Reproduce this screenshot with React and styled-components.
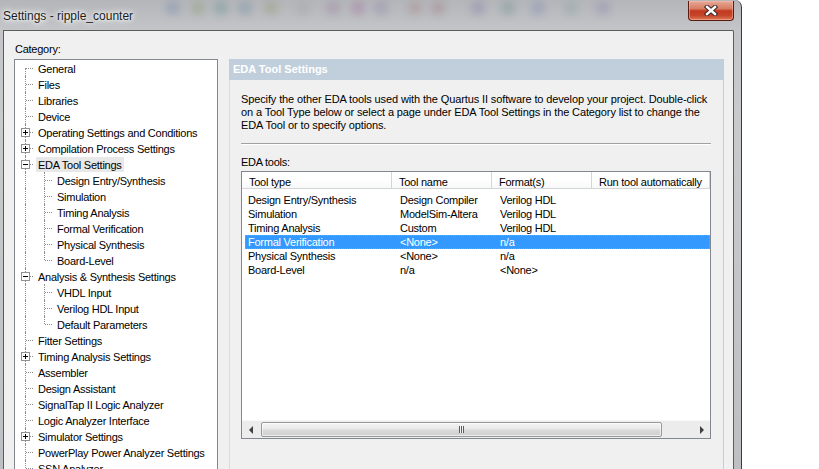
import styled, { createGlobalStyle } from "styled-components";

const GlobalStyle = createGlobalStyle`
  html, body {
    margin: 0;
    padding: 0;
    background: #ffffff;
  }
  body {
    font-family: "Liberation Sans", Arial, sans-serif;
    font-size: 11px;
    color: #000;
  }
`;

const treeItems = [
  { label: "General", kind: "first" },
  { label: "Files" },
  { label: "Libraries" },
  { label: "Device" },
  { label: "Operating Settings and Conditions", exp: "closed" },
  { label: "Compilation Process Settings", exp: "closed" },
  { label: "EDA Tool Settings", exp: "open", selected: true },
  { label: "Design Entry/Synthesis", level: 1 },
  { label: "Simulation", level: 1 },
  { label: "Timing Analysis", level: 1 },
  { label: "Formal Verification", level: 1 },
  { label: "Physical Synthesis", level: 1 },
  { label: "Board-Level", level: 1, last: true },
  { label: "Analysis & Synthesis Settings", exp: "open" },
  { label: "VHDL Input", level: 1 },
  { label: "Verilog HDL Input", level: 1 },
  { label: "Default Parameters", level: 1, last: true },
  { label: "Fitter Settings" },
  { label: "Timing Analysis Settings", exp: "closed" },
  { label: "Assembler" },
  { label: "Design Assistant" },
  { label: "SignalTap II Logic Analyzer" },
  { label: "Logic Analyzer Interface" },
  { label: "Simulator Settings", exp: "closed" },
  { label: "PowerPlay Power Analyzer Settings" },
  { label: "SSN Analyzer" },
];

const tools = [
  ["Design Entry/Synthesis", "Design Compiler", "Verilog HDL"],
  ["Simulation", "ModelSim-Altera", "Verilog HDL"],
  ["Timing Analysis", "Custom", "Verilog HDL"],
  ["Formal Verification", "<None>", "n/a", true],
  ["Physical Synthesis", "<None>", "n/a"],
  ["Board-Level", "n/a", "<None>"],
];

function TreeNode({ item }) {
  const level = item.level || 0;
  return (
    <TreeRow>
      {level === 1 && <Guide $kind="pipe" />}
      <Guide $kind={item.last ? "corner" : item.kind || "tee"}>
        {item.exp && <Expander $open={item.exp === "open"} />}
      </Guide>
      <NodeLabel $selected={item.selected}>{item.label}</NodeLabel>
    </TreeRow>
  );
}

function CloseGlyph() {
  return (
    <svg width="14" height="11" viewBox="0 0 14 11">
      <path d="M3 2 L11 9 M11 2 L3 9" stroke="#3b2a28" strokeWidth="4.4" strokeLinecap="square" />
      <path d="M3 2 L11 9 M11 2 L3 9" stroke="#ffffff" strokeWidth="2.4" strokeLinecap="square" />
    </svg>
  );
}

function GlassBackdrop() {
  const blobs = [
    [20, "#6c86a8"], [45, "#8a9a70"], [68, "#5f8c8c"], [92, "#6a8aa0"], [118, "#8a9a6a"],
    [150, "#a0a0a8"], [180, "#9c7ca0"], [205, "#a06a9a"], [228, "#9080a8"], [262, "#a88080"],
    [285, "#a07878"], [325, "#7a7aa8"], [355, "#6c8c90"], [385, "#7a86b0"], [418, "#8aa0a0"],
    [450, "#8c80b0"],
  ];
  return (
    <Backdrop width="480" height="30" viewBox="0 0 480 30">
      <defs>
        <filter id="glassBlur" x="-50%" y="-50%" width="200%" height="200%">
          <feGaussianBlur stdDeviation="4" />
        </filter>
      </defs>
      <g filter="url(#glassBlur)" opacity="0.4">
        {blobs.map(([x, c]) => (
          <circle key={x} cx={x} cy="8" r="7" fill={c} />
        ))}
      </g>
    </Backdrop>
  );
}

export default function App() {
  return (
    <Page>
      <GlobalStyle />
      <Window>
        <TitleBar>
          <Title>Settings - ripple_counter</Title>
          <GlassBackdrop />
          <CloseButton>
            <CloseGlyph />
          </CloseButton>
        </TitleBar>
        <Client>
          <CategoryLabel>Category:</CategoryLabel>
          <Tree>
            {treeItems.map((item) => (
              <TreeNode key={item.label} item={item} />
            ))}
          </Tree>
          <Panel>
            <PanelHeader>EDA Tool Settings</PanelHeader>
            <PanelBody>
              <Description>
                Specify the other EDA tools used with the Quartus II software to develop your project. Double-click
                <br />
                on a Tool Type below or select a page under EDA Tool Settings in the Category list to change the
                <br />
                EDA Tool or to specify options.
              </Description>
              <Separator />
              <FieldLabel>EDA tools:</FieldLabel>
              <ListView>
                <HeaderRow>
                  <HeaderCell>Tool type</HeaderCell>
                  <HeaderCell>Tool name</HeaderCell>
                  <HeaderCell>Format(s)</HeaderCell>
                  <HeaderCell>Run tool automatically</HeaderCell>
                </HeaderRow>
                <Rows>
                  {tools.map(([type, name, format, selected]) => (
                    <DataRow key={type} $selected={selected}>
                      <Cell $first>{type}</Cell>
                      <Cell>{name}</Cell>
                      <Cell>{format}</Cell>
                      <Cell />
                    </DataRow>
                  ))}
                </Rows>
                <HScroll>
                  <ArrowButton>
                    <ArrowLeft />
                  </ArrowButton>
                  <Track>
                    <Thumb>
                      <Grip />
                    </Thumb>
                  </Track>
                  <ArrowButton>
                    <ArrowRight />
                  </ArrowButton>
                </HScroll>
              </ListView>
            </PanelBody>
          </Panel>
        </Client>
      </Window>
    </Page>
  );
}

const Page = styled.div`
  width: 819px;
  height: 469px;
  overflow: hidden;
  background: #ffffff;
`;

const Window = styled.div`
  box-sizing: border-box;
  width: 742px;
  height: 469px;
  display: flex;
  flex-direction: column;
  padding: 0 7px 0 3px;
  border-right: 1px solid #3a3a3a;
  border-top-right-radius: 7px;
  background: linear-gradient(180deg, #b3b5b9 0px, #c3c5c8 30px, #c9cacc 120px, #bdbfc2 469px);
`;

const TitleBar = styled.div`
  height: 30px;
  flex: none;
  display: flex;
  align-items: flex-start;
`;

const Title = styled.div`
  flex: none;
  margin-top: 9px;
  font-size: 12px;
  line-height: 15px;
  color: #1c1c1c;
  text-shadow: 0 0 6px #ffffff, 0 0 10px #ffffff, 0 0 3px #ffffff;
`;

const Backdrop = styled.svg`
  flex: none;
  margin-left: 20px;
`;

const CloseButton = styled.div`
  margin-left: auto;
  margin-top: 1px;
  box-sizing: border-box;
  width: 46px;
  height: 20px;
  display: flex;
  align-items: center;
  justify-content: center;
  border: 1px solid #5a1b12;
  border-top: none;
  border-radius: 0 0 4px 4px;
  background: linear-gradient(180deg, #e6aa98 0%, #d77d63 40%, #c23a20 52%, #c54328 75%, #de7a58 100%);
  box-shadow: inset 0 0 0 1px rgba(255, 200, 180, 0.45);
`;

const Client = styled.div`
  flex: 1;
  min-height: 0;
  display: grid;
  grid-template-columns: 204px 495px;
  grid-template-rows: 17px 1fr;
  column-gap: 11px;
  padding: 11px 0 0 10px;
  background: #f0f0f0;
  border: 1px solid #5c5c5c;
  border-bottom: none;
  border-top-right-radius: 2px;
  overflow: hidden;
`;

const CategoryLabel = styled.div`
  grid-column: 1;
  grid-row: 1;
  padding-top: 1px;
  line-height: 13px;
  letter-spacing: -0.25px;
  padding-left: 1px;
`;

const Tree = styled.div`
  grid-column: 1;
  grid-row: 2;
  background: #ffffff;
  border: 1px solid #828790;
  border-bottom: none;
  overflow: hidden;
`;

const TreeRow = styled.div`
  height: 16px;
  display: flex;
  align-items: center;
  white-space: nowrap;
`;

const Guide = styled.span`
  position: relative;
  flex: none;
  width: 19px;
  height: 16px;

  &::before {
    content: "";
    position: absolute;
    left: 10px;
    top: ${(p) => (p.$kind === "first" ? "8px" : "0")};
    height: ${(p) => (p.$kind === "first" || p.$kind === "corner" ? "8px" : "16px")};
    border-left: 1px dotted #8c8c8c;
  }

  &::after {
    content: "";
    display: ${(p) => (p.$kind === "pipe" ? "none" : "block")};
    position: absolute;
    left: 11px;
    top: 8px;
    width: 7px;
    border-top: 1px dotted #8c8c8c;
  }
`;

const Expander = styled.span`
  position: absolute;
  z-index: 1;
  left: 6px;
  top: 4px;
  width: 9px;
  height: 9px;
  box-sizing: border-box;
  border: 1px solid #919191;
  background: #ffffff;

  &::before {
    content: "";
    position: absolute;
    left: 1px;
    top: 3px;
    width: 5px;
    height: 1px;
    background: #000;
  }

  &::after {
    content: "";
    display: ${(p) => (p.$open ? "none" : "block")};
    position: absolute;
    left: 3px;
    top: 1px;
    width: 1px;
    height: 5px;
    background: #000;
  }
`;

const NodeLabel = styled.span`
  margin-left: 2px;
  padding: 1px 2px 0;
  line-height: 14px;
  letter-spacing: -0.25px;
  background: ${(p) => (p.$selected ? "#e8e8e8" : "transparent")};
`;

const Panel = styled.div`
  grid-column: 2;
  grid-row: 2;
  display: flex;
  flex-direction: column;
  min-height: 0;
`;

const PanelHeader = styled.div`
  flex: none;
  height: 21px;
  line-height: 21px;
  padding-left: 4px;
  background: #c1cfdc;
  color: #ffffff;
  font-weight: bold;
`;

const PanelBody = styled.div`
  flex: 1;
  padding: 13px 12px 0 11px;
  border-left: 1px solid #d3dde6;
  border-right: 1px solid #c1cfdc;
`;

const Description = styled.p`
  margin: 0;
  line-height: 13px;
  letter-spacing: -0.12px;
  white-space: nowrap;
`;

const Separator = styled.div`
  margin-top: 11px;
  border-top: 1px solid #a0a0a0;
  border-bottom: 1px solid #ffffff;
`;

const FieldLabel = styled.div`
  margin-top: 11px;
  line-height: 13px;
  letter-spacing: -0.25px;
`;

const ListView = styled.div`
  box-sizing: border-box;
  margin-top: 2px;
  height: 268px;
  display: flex;
  flex-direction: column;
  background: #ffffff;
  border: 1px solid #828790;
`;

const HeaderRow = styled.div`
  flex: none;
  display: grid;
  grid-template-columns: 150px 100px 100px 118px;
  height: 17px;
  box-sizing: border-box;
  border-bottom: 1px solid #d5d5d5;
  background: linear-gradient(180deg, #ffffff 0%, #ffffff 50%, #f7f8f9 100%);
`;

const HeaderCell = styled.div`
  padding: 3px 0 0 7px;
  line-height: 14px;
  letter-spacing: -0.25px;
  white-space: nowrap;
  border-right: 1px solid #d5d5d5;
`;

const Rows = styled.div`
  flex: 1;
  padding-top: 4px;
`;

const DataRow = styled.div`
  display: grid;
  grid-template-columns: 147px 100px 100px 1fr;
  margin-left: 3px;
  height: 14px;
  line-height: 15px;
  background: ${(p) => (p.$selected ? "#3399ff" : "transparent")};
  color: ${(p) => (p.$selected ? "#ffffff" : "#000000")};
  outline: ${(p) => (p.$selected ? "1px dotted #e0903a" : "none")};
  outline-offset: -1px;
`;

const Cell = styled.div`
  padding-left: ${(p) => (p.$first ? "3px" : "8px")};
  letter-spacing: -0.25px;
  white-space: nowrap;
`;

const HScroll = styled.div`
  flex: none;
  height: 17px;
  display: flex;
  background: #ececec;
  border-top: 1px solid #f7f7f7;
`;

const ArrowButton = styled.div`
  flex: none;
  width: 17px;
  display: flex;
  align-items: center;
  justify-content: center;
`;

const ArrowLeft = styled.span`
  width: 0;
  height: 0;
  border-top: 4px solid transparent;
  border-bottom: 4px solid transparent;
  border-right: 4px solid #404040;
`;

const ArrowRight = styled.span`
  width: 0;
  height: 0;
  border-top: 4px solid transparent;
  border-bottom: 4px solid transparent;
  border-left: 4px solid #404040;
`;

const Track = styled.div`
  flex: 1;
  display: flex;
  align-items: center;
  padding-left: 2px;
`;

const Thumb = styled.div`
  box-sizing: border-box;
  width: 401px;
  height: 15px;
  display: flex;
  align-items: center;
  justify-content: center;
  border: 1px solid #999999;
  border-radius: 2px;
  background: linear-gradient(180deg, #f4f4f4 0%, #e9e9e9 45%, #d9d9d9 55%, #cfcfcf 100%);
  box-shadow: inset 0 0 0 1px rgba(255, 255, 255, 0.6);
`;

const Grip = styled.span`
  width: 5px;
  height: 7px;
  background: repeating-linear-gradient(90deg, #5c5c5c 0, #5c5c5c 1px, #f5f5f5 1px, #f5f5f5 2px);
`;
